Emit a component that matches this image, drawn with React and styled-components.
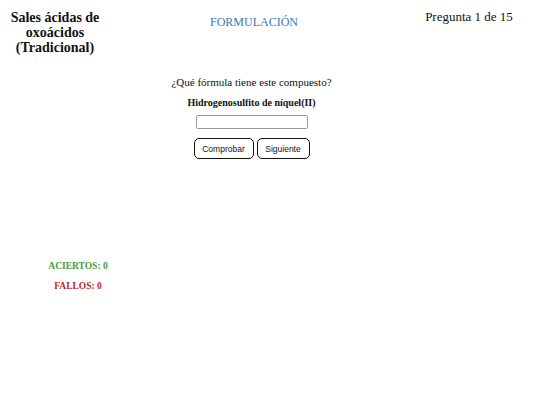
import React from 'react';
import styled, { createGlobalStyle } from 'styled-components';

const GlobalStyle = createGlobalStyle`
  html, body {
    margin: 0;
    padding: 0;
    background: #ffffff;
  }
  body {
    font-family: "Liberation Serif", "Times New Roman", serif;
    color: #111111;
  }
`;

const Page = styled.div`
  width: 540px;
  height: 405px;
  display: flex;
  flex-direction: column;
`;

const Header = styled.header`
  display: grid;
  grid-template-columns: 110px 288px 142px;
  align-items: start;
  padding-top: 10px;
`;

const Title = styled.h1`
  margin: 0;
  font-size: 14px;
  line-height: 15px;
  font-weight: bold;
  text-align: center;
`;

const Brand = styled.div`
  margin-top: 5px;
  font-size: 12px;
  color: #3b78b5;
  text-align: center;
`;

const Counter = styled.div`
  margin-top: -1px;
  font-size: 13px;
  text-align: center;
`;

const Quiz = styled.main`
  display: flex;
  flex-direction: column;
  align-items: center;
  width: 503px;
  margin-top: 21px;
`;

const Prompt = styled.p`
  margin: 0;
  font-size: 11px;
  line-height: 12px;
`;

const Compound = styled.p`
  margin: 8px 0 0;
  font-size: 10px;
  line-height: 14px;
  font-weight: bold;
`;

const Form = styled.div`
  display: flex;
  flex-direction: column;
  align-items: center;
`;

const Answer = styled.input`
  box-sizing: border-box;
  width: 112px;
  height: 14px;
  margin-top: 5px;
  border: 1px solid #9a9a9a;
  border-radius: 2px;
  padding: 0 3px;
  font-size: 9px;
  outline: none;
`;

const Buttons = styled.div`
  display: flex;
  gap: 3px;
  margin-top: 9px;
`;

const Button = styled.button`
  box-sizing: border-box;
  width: ${(p) => p.w}px;
  height: 21px;
  padding: 0;
  border: 1px solid #111111;
  border-radius: 5px;
  background: #ffffff;
  font-family: "Liberation Sans", Arial, sans-serif;
  font-size: 8.5px;
  color: #111111;
`;

const Stats = styled.div`
  width: 156px;
  margin-top: 102px;
  display: flex;
  flex-direction: column;
  gap: 9px;
`;

const Stat = styled.div`
  font-size: 9.5px;
  line-height: 11px;
  font-weight: bold;
  text-align: center;
  color: ${(p) => p.color};
`;

export default function App() {
  return (
    <>
      <GlobalStyle />
      <Page>
        <Header>
          <Title>
            Sales ácidas de
            <br />
            oxoácidos
            <br />
            (Tradicional)
          </Title>
          <Brand>FORMULACIÓN</Brand>
          <Counter>Pregunta 1 de 15</Counter>
        </Header>
        <Quiz>
          <Prompt>¿Qué fórmula tiene este compuesto?</Prompt>
          <Compound>Hidrogenosulfito de níquel(II)</Compound>
          <Form>
            <Answer type="text" />
            <Buttons>
              <Button w={60}>Comprobar</Button>
              <Button w={53}>Siguiente</Button>
            </Buttons>
          </Form>
        </Quiz>
        <Stats>
          <Stat color="#4a9a3c">ACIERTOS: 0</Stat>
          <Stat color="#c0262b">FALLOS: 0</Stat>
        </Stats>
      </Page>
    </>
  );
}
